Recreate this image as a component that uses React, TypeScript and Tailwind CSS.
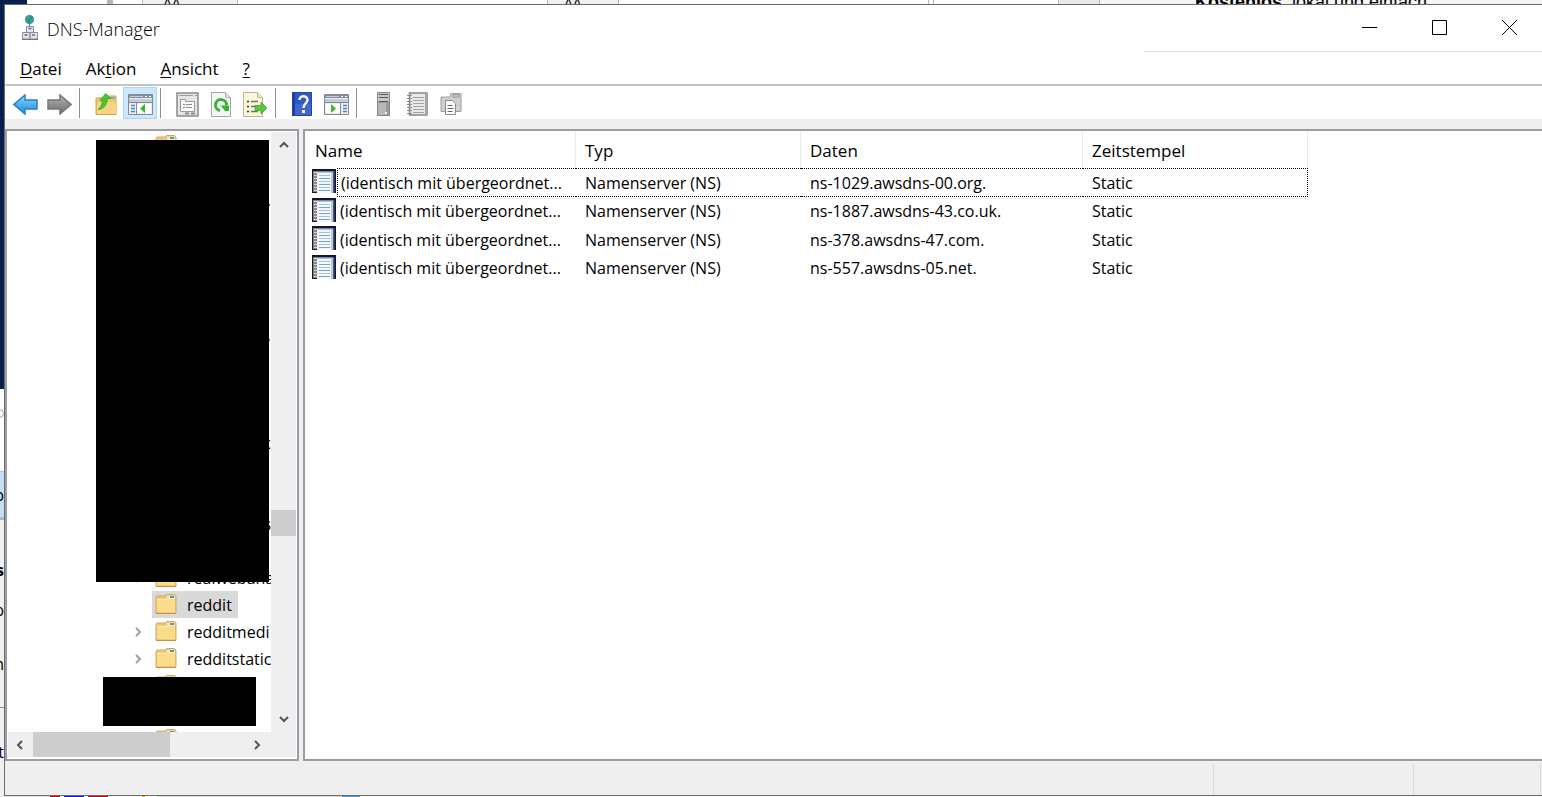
import type { ReactNode } from "react";
import clsx from "clsx";

const records = [
  { name: "(identisch mit übergeordnet...", type: "Namenserver (NS)", data: "ns-1029.awsdns-00.org.", stamp: "Static" },
  { name: "(identisch mit übergeordnet...", type: "Namenserver (NS)", data: "ns-1887.awsdns-43.co.uk.", stamp: "Static" },
  { name: "(identisch mit übergeordnet...", type: "Namenserver (NS)", data: "ns-378.awsdns-47.com.", stamp: "Static" },
  { name: "(identisch mit übergeordnet...", type: "Namenserver (NS)", data: "ns-557.awsdns-05.net.", stamp: "Static" },
];

type Zone = { label?: string; tail?: string; expandable?: boolean; selected?: boolean };

const zones: Zone[] = [
  {}, {}, { tail: "." }, {}, {}, {}, {}, { tail: "," },
  {}, {}, {}, { tail: "c" }, {}, {}, { tail: "s" }, {},
  { label: "realwebana", expandable: true },
  { label: "reddit", selected: true },
  { label: "redditmedi", expandable: true },
  { label: "redditstatic", expandable: true },
  {}, {}, {},
];

function Svg({ w, h, children }: { w: number; h: number; children: ReactNode }) {
  return (
    <svg width={w} height={h} viewBox={`0 0 ${w} ${h}`} fill="none" className="shrink-0" aria-hidden="true">
      {children}
    </svg>
  );
}

function AppIcon() {
  return (
    <Svg w={18} h={27}>
      <circle cx="8.500" cy="4.500" r="4.500" fill="#2389c9" />
      <path d="M4.500 3l3-2.500 2 1-1.500 3-2.500 1.500zM8.500 6l3-3 1 2-3 4z" fill="#3fae49" />
      <path d="M8.500 9v3" stroke="#777" />
      <g fill="#e3e5ec" stroke="#8b8e99">
        <path d="M5.500 11.500h7v6h-7zM1.500 17.500h7.500v6.500H1.500zM9 17.500h7.500v6.500H9z" />
      </g>
      <path d="M7.500 13.500h3M3.500 20h3M11 20h3" stroke="#676b7c" strokeWidth="1.500" />
      <path d="M1 24.500h16" stroke="#74777f" />
    </Svg>
  );
}

function FolderIcon() {
  return (
    <Svg w={22} h={21}>
      <path d="M1 19.500V3.500L2 2h8l1.500-1.500h8L21 2v17.500z" fill="#eccb78" stroke="#d3a95a" />
      <path d="M12 1.500h8v3h-8z" fill="#f6e6ae" />
      <path d="M15 2h4v2h-4z" fill="#3c9ae0" />
      <path d="M2 5h9l2-.5h7V18H2z" fill="#fbdc8a" />
      <path d="M2 5.500h9l2-1h7" stroke="#fff0bd" />
      <path d="M1 19.500h20" stroke="#c3923b" />
    </Svg>
  );
}

function RecordIcon() {
  return (
    <Svg w={24} h={24}>
      <path d="M0 0h24v24H0z" fill="#17181f" />
      <path d="M5 2h16v22H5z" fill="#f5f8fb" />
      <path d="M5 2h16v1.500H5z" fill="#6a8ad0" />
      <path d="M21 2h1.500v22H21z" fill="#3f55a0" />
      <path d="M19 4h2v20h-2z" fill="#c4c8d0" />
      <path d="M1 2h4v21H1z" fill="#858585" />
      <path d="M2 3.500h4M2 6.500h4M2 9.500h4M2 12.500h4M2 15.500h4M2 18.500h4M2 21.500h4" stroke="#d8d8d8" />
      <path d="M7 6.500h11M7 12.500h11M7 18.500h11" stroke="#a7bfdb" />
      <path d="M7 9.500h11M7 15.500h11M7 21.500h11" stroke="#6fa5c9" />
    </Svg>
  );
}

function ArrowIcon({ forward }: { forward?: boolean }) {
  return (
    <Svg w={25} h={21}>
      <defs>
        <linearGradient id={forward ? "fwd" : "back"} x1="0" y1="0" x2="0" y2="1">
          <stop offset="0" stopColor={forward ? "#b5b5b5" : "#8fd8ff"} />
          <stop offset="1" stopColor={forward ? "#6b6b6b" : "#1387dd"} />
        </linearGradient>
      </defs>
      {forward ? (
        <path d="M1 6h12V1l11 9.500L13 20v-5H1z" fill="url(#fwd)" stroke="#777" strokeWidth="1.500" />
      ) : (
        <path d="M24 6H12V1L1 10.500 12 20v-5h12z" fill="url(#back)" stroke="#2a80c4" strokeWidth="1.500" />
      )}
    </Svg>
  );
}

function UpIcon() {
  return (
    <Svg w={23} h={24}>
      <path d="M1 22.500V6h8l1-2h11v18.500z" fill="#ecc76f" stroke="#cfa24a" />
      <path d="M2 10h19v12H2z" fill="#f5d584" />
      <path d="M14 5h6v2h-6z" fill="#6fb0e6" />
      <path d="M3 17.500c3-2 4-5 4.500-9H5L10.500 1.500l5.500 5h-3.500c-.5 6-3.500 11-9.500 11z" fill="#46c52e" stroke="#2f9f24" strokeWidth=".7" />
    </Svg>
  );
}

function ConsoleIcon({ flip }: { flip?: boolean }) {
  return (
    <Svg w={25} h={21}>
      <path d="M.5.5h24v20H.5z" fill="#eceef1" stroke="#85898f" />
      <path d="M1 1h23v3H1z" fill="#7f8ca3" />
      <path d="M2 2.500h13" stroke="#c4cddb" />
      <path d="M17 2.500h2M21 2.500h2" stroke="#fff" />
      <path d="M1 5h23v3H1z" fill="#c7ccd4" />
      <path d="M1 8.500h23" stroke="#85898f" />
      {flip ? (
        <>
          <path d="M2 10h14v9H2z" fill="#fff" />
          <path d="M16.500 9v11" stroke="#85898f" />
          <path d="M7 10v9l5-4.500z" fill="#3bb52c" />
          <path d="M19 11.500h4M19 14.500h4M19 17.500h4" stroke="#4d84cb" strokeWidth="1.500" />
        </>
      ) : (
        <>
          <path d="M9 10h14v9H9z" fill="#fff" />
          <path d="M8.500 9v11" stroke="#85898f" />
          <path d="M17 10v9l-5-4.500z" fill="#3bb52c" />
          <path d="M3 11.500h4M3 14.500h4M3 17.500h4" stroke="#4d84cb" strokeWidth="1.500" />
        </>
      )}
    </Svg>
  );
}

function PropertiesIcon() {
  return (
    <Svg w={23} h={25}>
      <path d="M1 1h21v23H1z" fill="#e5e5e5" stroke="#8a8a8a" strokeWidth="1.500" />
      <path d="M3 3.500h14M19 3.500h2" stroke="#9b9b9b" />
      <path d="M4.500 7.500h5v2h9v10h-14z" fill="#fafafa" stroke="#999" />
      <path d="M7 12.500h2M10 12.500h6M7 15.500h2M10 15.500h6" stroke="#8a8a8a" />
      <path d="M9 21.500h4M15 21.500h4" stroke="#888" strokeWidth="2" />
    </Svg>
  );
}

function RefreshIcon() {
  return (
    <Svg w={20} h={25}>
      <path d="M.5.5h14l5 5v19H.5z" fill="#f5f5f5" stroke="#a5a5a5" />
      <path d="M14.500.5v5h5" fill="#ddd" stroke="#b5b5b5" />
      <path d="M9 18.500a5.500 5.500 0 1 1 6.500-5" stroke="#35b335" strokeWidth="3" />
      <path d="M9.500 13.500H18v5.500h-4z" fill="#35b335" />
    </Svg>
  );
}

function ExportIcon() {
  return (
    <Svg w={25} h={25}>
      <path d="M.5.500h14l5 5v19H.5z" fill="#fdf7dc" stroke="#b9b39b" />
      <path d="M14.500.5v5h5" fill="#eee5bf" stroke="#c5bea2" />
      <path d="M4 9.500h2M4 14.500h2M4 19.500h2" stroke="#333" strokeWidth="1.500" />
      <path d="M8 9.500h7M8 14.500h5M8 19.500h7" stroke="#77736b" strokeWidth="1.500" />
      <path d="M12 13.500h6V10l6 6-6 6v-3.500h-6z" fill="#57c938" stroke="#38a02b" strokeWidth=".7" />
    </Svg>
  );
}

function HelpIcon() {
  return (
    <Svg w={20} h={24}>
      <path d="M0 0h20v24H0z" fill="#3158c8" />
      <path d="M0 0h3v24H0z" fill="#1f3d9b" />
      <path d="M3 12h17v12H3z" fill="#4b70d4" opacity=".6" />
      <path d="M.5.5h19v23H.5z" stroke="#24449f" />
      <path d="M7.500 8c0-5 8-5 8 0 0 3.500-4 3.500-4 8" stroke="#f5f7ff" strokeWidth="2.500" />
      <path d="M10 18h3v3h-3z" fill="#f5f7ff" />
    </Svg>
  );
}

function ServerIcon() {
  return (
    <Svg w={13} h={24}>
      <path d="M.5.5h12v23H.5z" fill="#9a9a9a" stroke="#858585" />
      <path d="M1 11h8v12H1z" fill="#b8b8b8" />
      <path d="M1 1h11v9H1z" fill="#c8c8c8" />
      <path d="M2 2.500h9M2 5.500h9M2 9.500h9" stroke="#555" />
      <path d="M8 20h2v2H8z" fill="#eee" />
    </Svg>
  );
}

function ListIcon() {
  return (
    <Svg w={21} h={24}>
      <path d="M2.500 1h17.500v22H2.500z" fill="#e9e9e9" stroke="#858585" strokeWidth="1.500" />
      <path d="M18 2h2v21h-2z" fill="#a5a5a5" />
      <path d="M6 5.500h11M6 8.500h11M6 11.500h11M6 14.500h11M6 17.500h11M6 20.500h11" stroke="#a2a2a2" />
      <path d="M0 3.500h5M0 6.500h5M0 9.500h5M0 12.500h5M0 15.500h5M0 18.500h5M0 21.500h5" stroke="#8b8b8b" />
    </Svg>
  );
}

function CopiesIcon() {
  return (
    <Svg w={22} h={24}>
      <path d="M1 19.500V5h9l1-3.500h10v18z" fill="#d0d0d0" stroke="#9e9e9e" />
      <path d="M13 3h6v2h-6z" fill="#f1f1f1" stroke="#888" />
      <path d="M5.500 8.500h7l3 3v11h-10z" fill="#fbfbfb" stroke="#8b8b8b" />
      <path d="M7.500 13.500h5M7.500 16.500h6M7.500 19.500h5" stroke="#696969" />
    </Svg>
  );
}

function Chevron({ d, light }: { d: string; light?: boolean }) {
  return (
    <Svg w={10} h={10}>
      <path d={d} stroke={light ? "#a0a0a0" : "#555"} strokeWidth="2" />
    </Svg>
  );
}

const UP = "M1 7l4-4 4 4";
const DOWN = "M1 3l4 4 4-4";
const LEFT = "M7 1L3 5l4 4";
const RIGHT = "M3 1l4 4-4 4";

function Tool({ label, active, children }: { label: string; active?: boolean; children: ReactNode }) {
  return (
    <button
      type="button"
      aria-label={label}
      className={clsx(
        "flex h-8 w-[34px] items-center justify-center pt-0.5",
        active && "bg-[#cce8ff] outline outline-1 -outline-offset-1 outline-[#a9d6fa]",
      )}
    >
      {children}
    </button>
  );
}

function Separator() {
  return <div className="mr-[9px] mb-px ml-[3px] h-[30px] w-px bg-[#8f8f8f]" />;
}

function TitleBar() {
  return (
    <header className="flex h-[47px] shrink-0 justify-between pl-4">
      <div className="flex items-center gap-2">
        <AppIcon />
        <h1 className="font-['Open_Sans',sans-serif] text-[18px] font-light text-black">DNS-Manager</h1>
      </div>
      <div className="flex w-[398px] items-center justify-end gap-1 border-b border-[#e5e5e5] pb-px">
        <button type="button" aria-label="Minimieren" className="flex h-full w-[66px] items-center justify-center">
          <Svg w={15} h={15}><path d="M0 7.500h15" stroke="#000" /></Svg>
        </button>
        <button type="button" aria-label="Maximieren" className="flex h-full w-[66px] items-center justify-center">
          <Svg w={15} h={15}><path d="M.5.5h14v14H.5z" stroke="#000" /></Svg>
        </button>
        <button type="button" aria-label="Schließen" className="flex h-full w-[66px] items-center justify-center">
          <Svg w={15} h={15}><path d="M0 0l15 15M15 0L0 15" stroke="#000" /></Svg>
        </button>
      </div>
    </header>
  );
}

function MenuBar() {
  return (
    <nav className="flex h-8 shrink-0 items-end gap-6 pb-[3px] pl-[15px]">
      <button type="button"><u className="underline-offset-2">D</u>atei</button>
      <button type="button">Ak<u className="underline-offset-2">t</u>ion</button>
      <button type="button"><u className="underline-offset-2">A</u>nsicht</button>
      <button type="button"><u className="underline-offset-2">?</u></button>
    </nav>
  );
}

function Toolbar() {
  return (
    <div className="flex h-[35px] shrink-0 items-end border-t-2 border-[#c3c3c3] pl-[3px]">
      <Tool label="Zurück"><ArrowIcon /></Tool>
      <Tool label="Vorwärts"><ArrowIcon forward /></Tool>
      <Separator />
      <Tool label="Eine Ebene nach oben"><UpIcon /></Tool>
      <Tool label="Konsolenstruktur" active><ConsoleIcon /></Tool>
      <Separator />
      <Tool label="Eigenschaften"><PropertiesIcon /></Tool>
      <Tool label="Aktualisieren"><RefreshIcon /></Tool>
      <Tool label="Liste exportieren"><ExportIcon /></Tool>
      <Separator />
      <Tool label="Hilfe"><HelpIcon /></Tool>
      <Tool label="Aktionsbereich"><ConsoleIcon flip /></Tool>
      <Separator />
      <Tool label="Neuer Server"><ServerIcon /></Tool>
      <Tool label="Neuer Eintrag"><ListIcon /></Tool>
      <Tool label="Neue Zone"><CopiesIcon /></Tool>
    </div>
  );
}

function ZoneTree() {
  return (
    <aside className="flex w-[294px] shrink-0 flex-col border-2 border-[#9a9ca6] bg-white p-px pb-0.5 text-[16px]">
      <div className="flex min-h-0 flex-1">
        <div className="relative min-w-0 flex-1 overflow-hidden">
          <ul>
            {zones.map((zone, i) => (
              <li key={i} className="flex h-[27px] items-center pl-[125px]">
                <span className="flex w-[19px] shrink-0">
                  {zone.expandable && <Chevron d={RIGHT} light />}
                </span>
                <span
                  className={clsx(
                    "flex h-full shrink-0 items-center gap-2.5 pr-1.5 pl-[3px] whitespace-nowrap",
                    zone.selected && "bg-[#d9d9d9]",
                  )}
                >
                  <FolderIcon />
                  {zone.label}
                </span>
                {zone.tail && <span className="ml-auto">{zone.tail}</span>}
              </li>
            ))}
          </ul>
          <div className="absolute top-2 right-[2px] h-[442px] w-[173px] bg-black" />
          <div className="absolute top-[545px] right-[15px] h-[49px] w-[153px] bg-black" />
        </div>
        <div className="flex w-[25px] flex-col items-center bg-[#efefef] py-2">
          <Chevron d={UP} />
          <div className="mt-[360px] h-[26px] w-full bg-[#cdcdcd]" />
          <span className="mt-auto"><Chevron d={DOWN} /></span>
        </div>
      </div>
      <div className="flex h-[25px] shrink-0 items-center bg-[#efefef] pr-[34px] pl-[7px]">
        <Chevron d={LEFT} />
        <div className="ml-2 h-full w-[137px] bg-[#cdcdcd]" />
        <span className="ml-auto"><Chevron d={RIGHT} /></span>
      </div>
    </aside>
  );
}

function RecordList() {
  return (
    <main className="min-w-0 flex-1 overflow-hidden border-y-2 border-l-2 border-[#9a9ca6] bg-white">
      <table className="w-[1003px] table-fixed border-separate border-spacing-0 text-left">
        <colgroup>
          <col className="w-8" />
          <col className="w-[239px]" />
          <col className="w-[225px]" />
          <col className="w-[282px]" />
          <col className="w-[225px]" />
        </colgroup>
        <thead>
          <tr className="h-[37px]">
            <th colSpan={2} className="border-r border-[#e8e8e8] pt-0.5 pl-[10px] font-normal">Name</th>
            <th className="border-r border-[#e8e8e8] pt-0.5 pl-[9px] font-normal">Typ</th>
            <th className="border-r border-[#e8e8e8] pt-0.5 pl-[9px] font-normal">Daten</th>
            <th className="border-r border-[#e8e8e8] pt-0.5 pl-[9px] font-normal">Zeitstempel</th>
          </tr>
        </thead>
        <tbody className="text-[16px] whitespace-nowrap">
          {records.map((r, i) => {
            const focus = i === 0 && "border-y border-dotted border-black";
            return (
              <tr key={r.data} className="odd:h-[29px] even:h-[28px]">
                <td className="p-0 pt-px pl-[7px] align-top"><RecordIcon /></td>
                <td className={clsx("p-0 pl-[3px]", focus, i === 0 && "border-l")}>{r.name}</td>
                <td className={clsx("p-0 pl-[9px]", focus)}>{r.type}</td>
                <td className={clsx("p-0 pl-[9px]", focus)}>{r.data}</td>
                <td className={clsx("p-0 pl-[9px]", focus, i === 0 && "border-r")}>{r.stamp}</td>
              </tr>
            );
          })}
        </tbody>
      </table>
    </main>
  );
}

function StatusBar() {
  return (
    <footer className="flex h-[34px] shrink-0 justify-end pt-[3px]">
      <div className="w-[200px] border-l border-[#dadada]" />
      <div className="w-[128px] border-x border-[#dadada]" />
      <div className="w-px" />
    </footer>
  );
}

/* Slivers of the windows lying behind the console */
function TopEdge() {
  return (
    <div className="flex h-1 shrink-0 overflow-hidden bg-white">
      <div className="w-[27px] bg-[#06204a]" />
      <div className="w-20 bg-white" />
      <div className="w-1.5 bg-[#b5b5b5]" />
      <div className="w-[29px] bg-white" />
      <div className="w-24 border-x border-[#b5b5b5] bg-[#f0f0f0] pl-5 text-[14px] leading-[6px]">AA</div>
      <div className="w-[309px]" />
      <div className="w-[72px] border-x border-[#b5b5b5] bg-[#f0f0f0] pl-4 text-[14px] leading-[6px]">AA</div>
      <div className="w-[309px]" />
      <div className="w-1.5 border-x border-[#b5b5b5]" />
      <div className="w-[124px]" />
      <div className="w-[42px] border-x border-[#b5b5b5] bg-[#e8e8e8]" />
      <div className="flex flex-1 bg-[#f5f5f5] pl-[95px] font-['Liberation_Sans',sans-serif] text-[18px] leading-[4px] whitespace-nowrap text-black">
        <b>Kostenlos</b>, lokal und einfach
      </div>
    </div>
  );
}

function LeftEdge() {
  return (
    <div className="flex w-1 shrink-0 flex-col overflow-hidden bg-[#f0f0f0] text-[16px] leading-6 text-black">
      <div className="h-[385px] bg-[#06204a]" />
      <div className="flex h-[82px] justify-end bg-white pt-5">
        <span className="h-[9px] w-[9px] shrink-0 rounded-full border border-gray-400" />
      </div>
      <div className="flex h-[47px] items-center justify-end border-y border-[#9cc7ec] bg-[#c5def5]">p</div>
      <div className="flex h-[68px] items-end justify-end border-t-2 border-[#b5b5b5] pb-1 font-bold">s</div>
      <div className="flex h-10 items-end justify-end pb-1">b</div>
      <div className="flex h-[54px] items-end justify-end pb-1">h</div>
      <div className="h-7 border-b border-[#8f8f8f]" />
      <div className="flex flex-1 items-center justify-end">t</div>
    </div>
  );
}

function BottomEdge() {
  return (
    <div className="flex h-px shrink-0 bg-white">
      <div className="w-[50px] bg-[#e5e5e5]" />
      <div className="w-2.5 bg-[#d4001a]" />
      <div className="ml-1 w-5 bg-[#1414e0]" />
      <div className="ml-1 w-5 bg-[#d4001a]" />
      <div className="ml-[34px] w-[3px] bg-[#f2a400]" />
      <div className="ml-3 w-[185px] bg-[#e0e0e0]" />
      <div className="w-[18px] bg-[#3a9be8]" />
    </div>
  );
}

export default function App() {
  return (
    <div className="flex h-screen flex-col overflow-hidden bg-white font-['Open_Sans','Noto_Sans',sans-serif] text-[17px] leading-6 text-black">
      <TopEdge />
      <div className="flex min-h-0 flex-1">
        <LeftEdge />
        <div className="flex min-w-0 flex-1 flex-col border-y border-l border-[#6b6b6b] bg-white">
          <TitleBar />
          <MenuBar />
          <Toolbar />
          <div className="flex min-h-0 flex-1 flex-col bg-[#efefef] pt-2.5">
            <div className="flex min-h-0 flex-1 gap-1">
              <ZoneTree />
              <RecordList />
            </div>
            <StatusBar />
          </div>
        </div>
      </div>
      <BottomEdge />
    </div>
  );
}
